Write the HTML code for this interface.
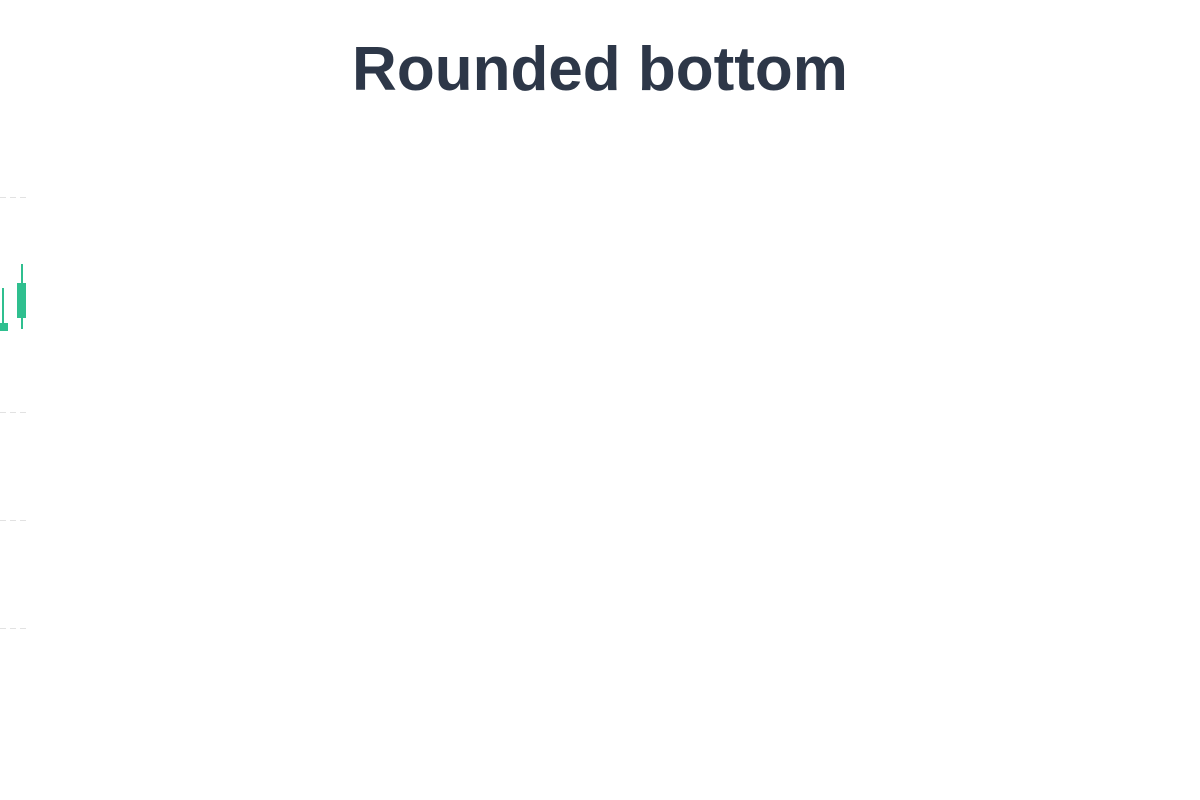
<!DOCTYPE html>
<html><head><style>
html,body{margin:0;padding:0;background:#fff;width:1200px;height:800px;overflow:hidden}
h1{position:absolute;left:0;width:1200px;top:35px;margin:0;text-align:center;font:bold 62px/70px "Liberation Sans",sans-serif;color:#2d3748}
</style></head><body>
<h1>Rounded bottom</h1>
<svg width="1200" height="800" style="position:absolute;left:0;top:0">
<g stroke="#e2e2e2" stroke-width="1" stroke-dasharray="6,4">
<line x1="0" y1="197.5" x2="28" y2="197.5"/>
<line x1="0" y1="412.5" x2="28" y2="412.5"/>
<line x1="0" y1="520.5" x2="28" y2="520.5"/>
<line x1="0" y1="628.5" x2="28" y2="628.5"/>
</g>
<g fill="#2fbf8f">
<rect x="2" y="288" width="2" height="42"/>
<rect x="0" y="323" width="8" height="8"/>
<rect x="21" y="264" width="2" height="65"/>
<rect x="17" y="283" width="9" height="35"/>
</g>
</svg>
</body></html>
